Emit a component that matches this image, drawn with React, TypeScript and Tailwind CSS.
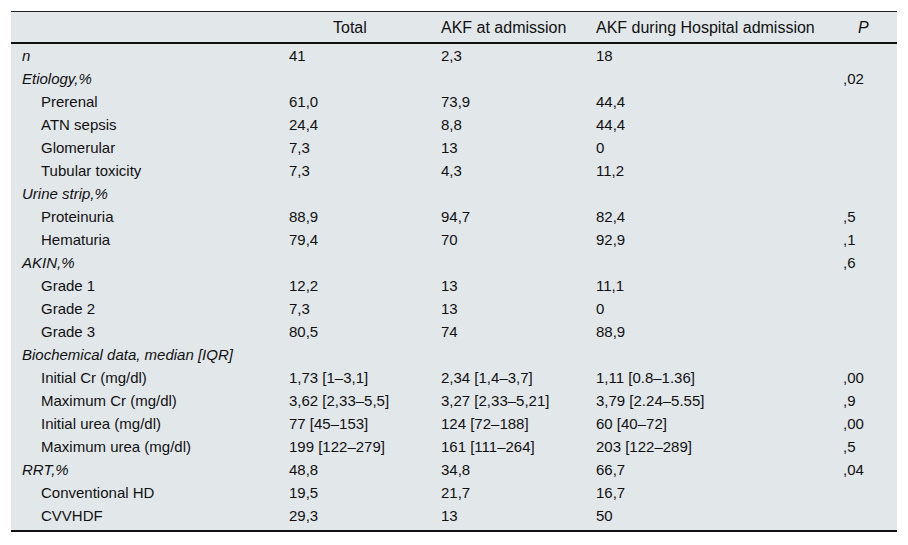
import React from "react";

type Row = { label: string; italic?: boolean; indent?: boolean; c: [string, string, string, string] };

const rows: Row[] = [
  { label: "n", italic: true, c: ["41", "2,3", "18", ""] },
  { label: "Etiology,%", italic: true, c: ["", "", "", ",02"] },
  { label: "Prerenal", indent: true, c: ["61,0", "73,9", "44,4", ""] },
  { label: "ATN sepsis", indent: true, c: ["24,4", "8,8", "44,4", ""] },
  { label: "Glomerular", indent: true, c: ["7,3", "13", "0", ""] },
  { label: "Tubular toxicity", indent: true, c: ["7,3", "4,3", "11,2", ""] },
  { label: "Urine strip,%", italic: true, c: ["", "", "", ""] },
  { label: "Proteinuria", indent: true, c: ["88,9", "94,7", "82,4", ",5"] },
  { label: "Hematuria", indent: true, c: ["79,4", "70", "92,9", ",1"] },
  { label: "AKIN,%", italic: true, c: ["", "", "", ",6"] },
  { label: "Grade 1", indent: true, c: ["12,2", "13", "11,1", ""] },
  { label: "Grade 2", indent: true, c: ["7,3", "13", "0", ""] },
  { label: "Grade 3", indent: true, c: ["80,5", "74", "88,9", ""] },
  { label: "Biochemical data, median [IQR]", italic: true, c: ["", "", "", ""] },
  { label: "Initial Cr (mg/dl)", indent: true, c: ["1,73 [1–3,1]", "2,34 [1,4–3,7]", "1,11 [0.8–1.36]", ",00"] },
  { label: "Maximum Cr (mg/dl)", indent: true, c: ["3,62 [2,33–5,5]", "3,27 [2,33–5,21]", "3,79 [2.24–5.55]", ",9"] },
  { label: "Initial urea (mg/dl)", indent: true, c: ["77 [45–153]", "124 [72–188]", "60 [40–72]", ",00"] },
  { label: "Maximum urea (mg/dl)", indent: true, c: ["199 [122–279]", "161 [111–264]", "203 [122–289]", ",5"] },
  { label: "RRT,%", italic: true, c: ["48,8", "34,8", "66,7", ",04"] },
  { label: "Conventional HD", indent: true, c: ["19,5", "21,7", "16,7", ""] },
  { label: "CVVHDF", indent: true, c: ["29,3", "13", "50", ""] },
];

export default function App() {
  return (
    <div
      className="w-[908px] h-[545px] bg-white pt-[11px] pl-[11px] text-[#111] text-[15px] leading-none"
      style={{ fontFamily: '"Liberation Sans", Arial, sans-serif' }}
    >
      <div className="w-[886px] bg-[#e2e7ea] border-t border-[#222] border-b-2 border-b-[#111] pb-[3px]">
        <div className="grid grid-cols-[278px_152px_155px_247px_54px] h-[32px] pt-[2px] items-center border-b-[2px] border-[#111] text-[16px]">
          <div />
          <div className="pl-[44px]">Total</div>
          <div>AKF at admission</div>
          <div>AKF during Hospital admission</div>
          <div className="pl-[15px] italic">P</div>
        </div>
        {rows.map((r, i) => (
          <div key={i} className="grid grid-cols-[278px_152px_155px_247px_54px] h-[23px] items-center">
            <div className={(r.indent ? "pl-[30px]" : "pl-[11px]") + (r.italic ? " italic" : "")}>{r.label}</div>
            <div>{r.c[0]}</div>
            <div>{r.c[1]}</div>
            <div>{r.c[2]}</div>
            <div>{r.c[3]}</div>
          </div>
        ))}
      </div>
    </div>
  );
}
